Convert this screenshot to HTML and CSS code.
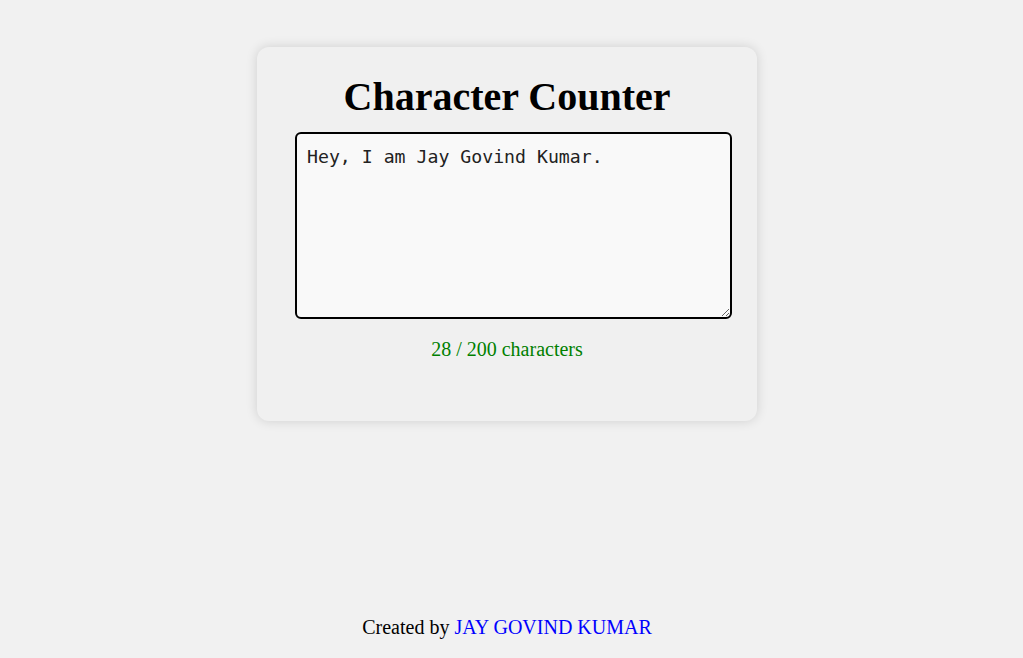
FILE: index.html
```html
<!DOCTYPE html>
<html lang="en">
<head>
<meta charset="utf-8">
<title>Character Counter</title>
<link rel="stylesheet" href="styles.css">
</head>
<body>
<main class="card">
  <h1 class="title">Character Counter</h1>
  <textarea class="input" maxlength="200">Hey, I am Jay Govind Kumar. </textarea>
  <p class="count">28 / 200 characters</p>
</main>
<footer class="footer">Created by <a class="author" href="#">JAY GOVIND KUMAR</a></footer>
</body>
</html>
```

FILE: styles.css
```css
html, body {
  margin: 0;
  padding: 0;
}
body {
  background: #f1f1f1;
  font-family: "Liberation Serif", "Times New Roman", serif;
  min-height: 100vh;
  box-sizing: border-box;
  padding-right: 9px;
  display: flex;
  flex-direction: column;
  align-items: center;
}
.card {
  margin-top: 47px;
  width: 500px;
  box-sizing: border-box;
  padding: 27px 25px 60px;
  background: #f0f0f0;
  border-radius: 12px;
  box-shadow: 0 0 12px rgba(0, 0, 0, 0.14);
  text-align: center;
}
.title {
  margin: 0 0 12px;
  font-size: 40px;
  font-weight: bold;
  line-height: 46px;
  color: #000;
}
.input {
  display: block;
  box-sizing: border-box;
  width: 437px;
  height: 187px;
  margin: 0 0 19px 13px;
  padding: 12px 10px;
  border: 2px solid #000;
  border-radius: 6px;
  background: #f9f9f9;
  font-family: "DejaVu Sans Mono", monospace;
  font-size: 18.2px;
  color: #222;
  text-align: left;
}
.count {
  margin: 0;
  font-size: 20px;
  line-height: 23px;
  color: #008000;
}
.footer {
  margin-top: auto;
  padding-bottom: 20px;
  font-size: 20px;
  line-height: 22px;
  color: #000;
}
.author {
  color: #0000ff;
  text-decoration: none;
}
```
